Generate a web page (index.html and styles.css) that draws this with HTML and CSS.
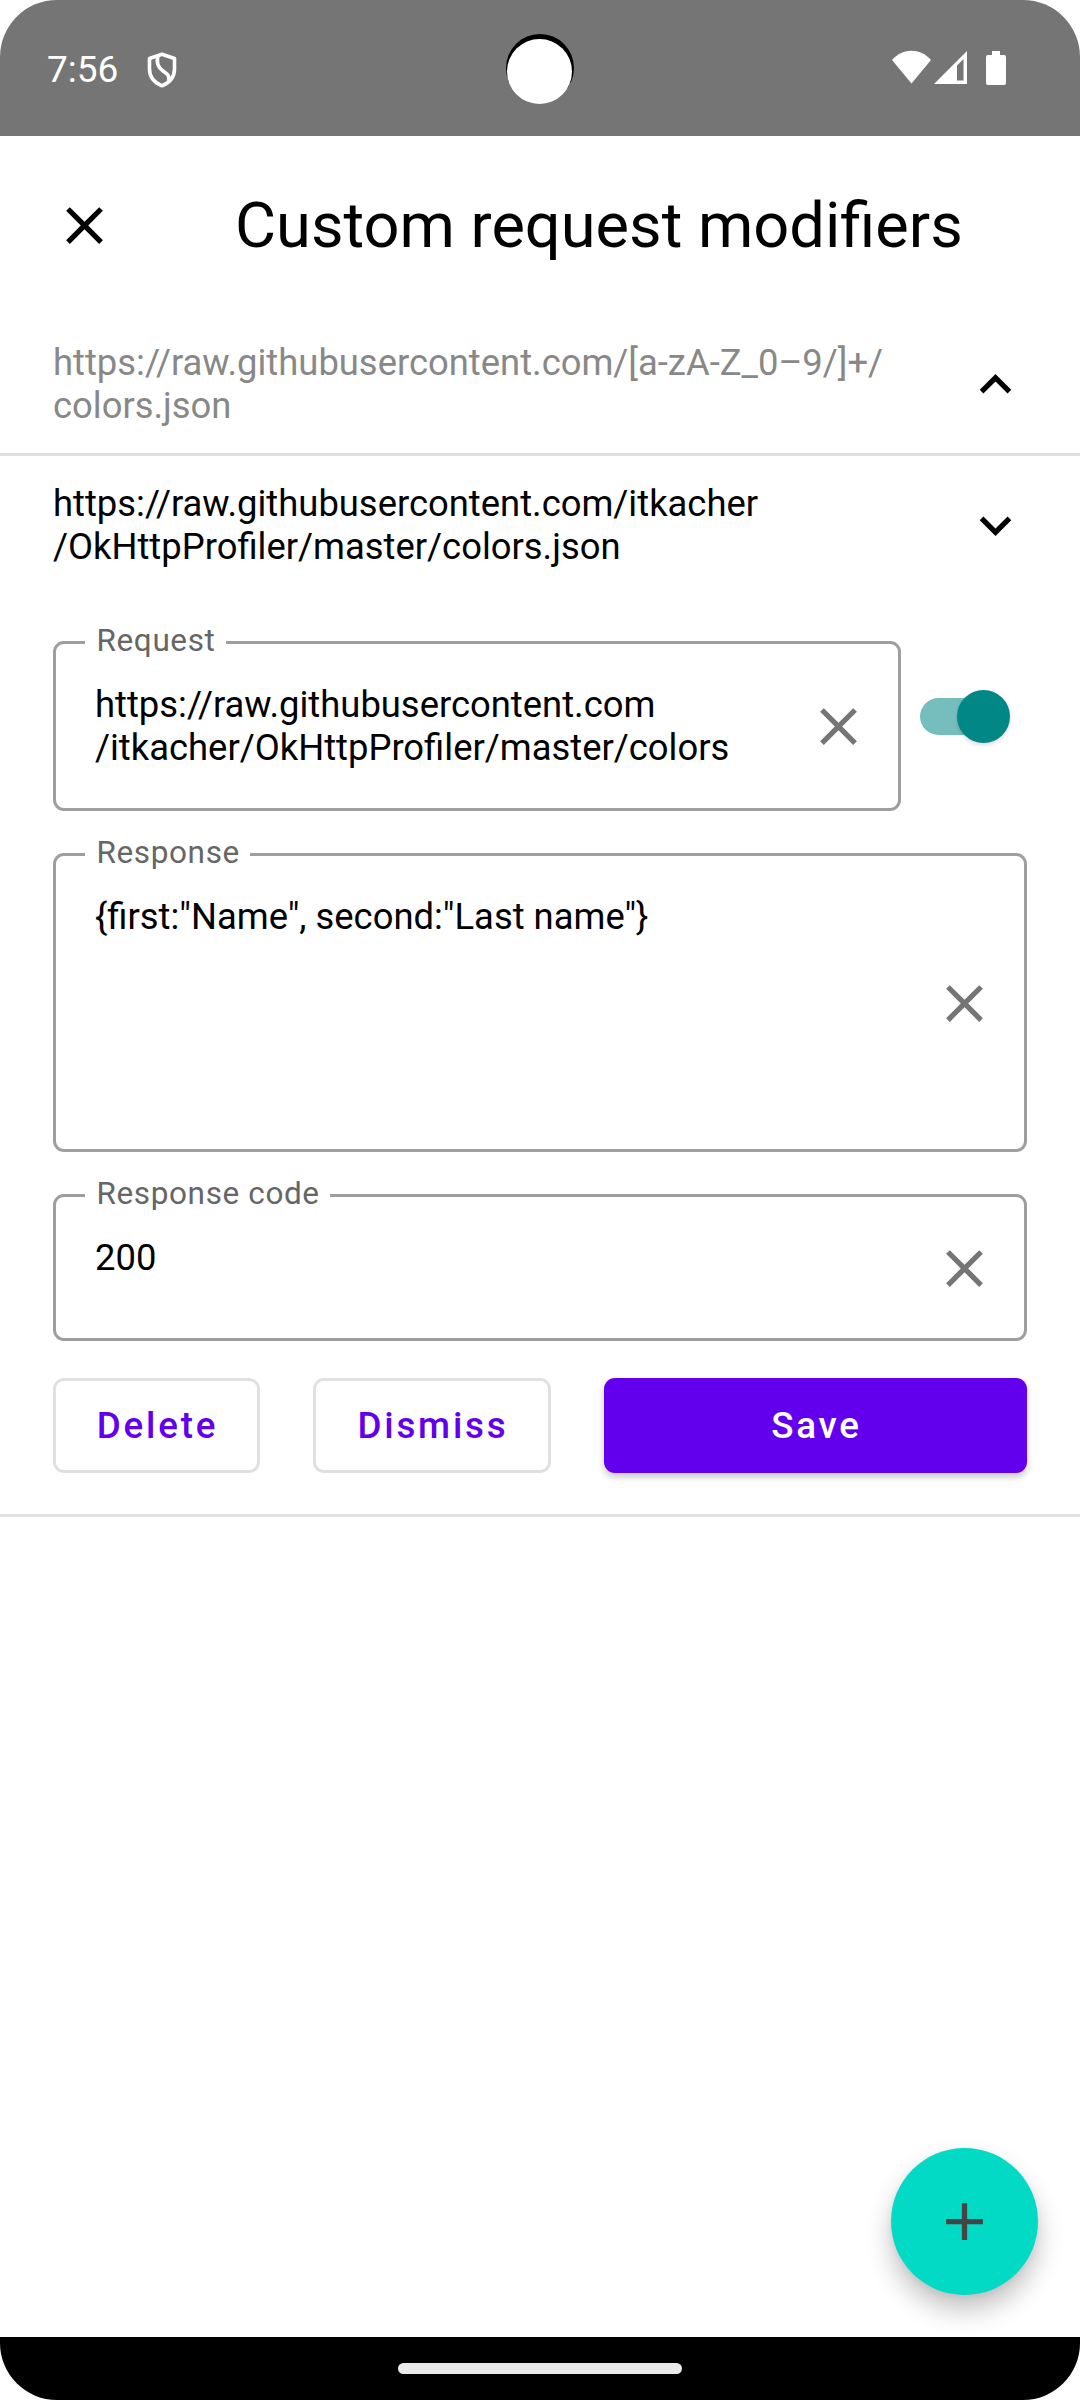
FILE: index.html
```html
<!DOCTYPE html>
<html lang="en">
<head>
<meta charset="utf-8">
<title>Custom request modifiers</title>
<link rel="stylesheet" href="styles.css">
</head>
<body>
<div class="screen">
  <header class="status-bar">
    <span class="clock">7:56</span>
    <svg class="shield" viewBox="0 0 30 36" width="30" height="36"><path d="M15 2.200 27.500 6.500V17C27.500 25 23 30.500 15 33.800 7 30.500 2.500 25 2.500 17V6.500Z" fill="none" stroke="#fff" stroke-width="3.600" stroke-linejoin="round"/><path d="M11 4C9 11 11 15.500 16 19 21 22.500 23 24 21.500 29" fill="none" stroke="#fff" stroke-width="3.600"/></svg>
    <svg class="camera" viewBox="0 0 70 72" width="70" height="72"><circle cx="35" cy="35" r="34" fill="#000"/><circle cx="34.500" cy="38.500" r="32.500" fill="#fff"/></svg>
    <svg class="signals" viewBox="0 0 116 36" width="116" height="36" fill="#fff"><path d="M19.500 33.500 0 10C11-2.200 28-2.200 39 10Z"/><path fill-rule="evenodd" d="M42 34 75 1V34ZM65 30.500H71.500V9L65 15.500Z"/><path d="M100 1H108V5H112Q114 5 114 7V33Q114 35 112 35H96Q94 35 94 33V7Q94 5 96 5H100Z"/></svg>
  </header>

  <div class="toolbar">
    <svg class="icon" viewBox="0 0 24 24"><path d="M19 6.410 17.590 5 12 10.590 6.410 5 5 6.410 10.590 12 5 17.590 6.410 19 12 13.410 17.590 19 19 17.590 13.410 12z"/></svg>
    <h1 class="title">Custom request modifiers</h1>
  </div>

  <main class="list">
    <div class="row divided">
      <p class="url muted">https://raw.githubusercontent.com/[a-zA-Z_0–9/]+/<br>colors.json</p>
      <svg class="icon" viewBox="0 0 24 24"><path d="M12 8l-6 6 1.410 1.410L12 10.830l4.590 4.580L18 14z"/></svg>
    </div>
    <div class="row">
      <p class="url">https://raw.githubusercontent.com/itkacher<br>/OkHttpProfiler/master/colors.json</p>
      <svg class="icon" viewBox="0 0 24 24"><path d="M16.590 8.590 12 13.170 7.410 8.590 6 10l6 6 6-6z"/></svg>
    </div>

    <form class="editor">
      <div class="request-line">
        <div class="field request">
          <label class="label">Request</label>
          <div class="value">https://raw.githubusercontent.com<br>/itkacher/OkHttpProfiler/master/colors</div>
          <svg class="icon clear" viewBox="0 0 24 24"><path d="M19 6.410 17.590 5 12 10.590 6.410 5 5 6.410 10.590 12 5 17.590 6.410 19 12 13.410 17.590 19 19 17.590 13.410 12z"/></svg>
        </div>
        <div class="switch"><span class="thumb"></span></div>
      </div>
      <div class="field response">
        <label class="label">Response</label>
        <div class="value">{first:"Name", second:"Last name"}</div>
        <svg class="icon clear" viewBox="0 0 24 24"><path d="M19 6.410 17.590 5 12 10.590 6.410 5 5 6.410 10.590 12 5 17.590 6.410 19 12 13.410 17.590 19 19 17.590 13.410 12z"/></svg>
      </div>
      <div class="field code">
        <label class="label">Response code</label>
        <div class="value">200</div>
        <svg class="icon clear" viewBox="0 0 24 24"><path d="M19 6.410 17.590 5 12 10.590 6.410 5 5 6.410 10.590 12 5 17.590 6.410 19 12 13.410 17.590 19 19 17.590 13.410 12z"/></svg>
      </div>
      <div class="actions">
        <button class="btn outlined delete" type="button">Delete</button>
        <button class="btn outlined dismiss" type="button">Dismiss</button>
        <button class="btn filled" type="button">Save</button>
      </div>
    </form>
  </main>

  <button class="fab" type="button" aria-label="Add">
    <svg viewBox="0 0 24 24" width="63" height="63"><path d="M19 13h-6v6h-2v-6H5v-2h6V5h2v6h6z"/></svg>
  </button>
  <footer class="nav-bar"><span class="handle"></span></footer>
</div>
</body>
</html>
```
FILE: styles.css
```css
* { box-sizing: border-box; margin: 0; padding: 0; }

body { background: #fff; font-family: Roboto, sans-serif; }

.screen {
  position: relative;
  display: flex;
  flex-direction: column;
  width: 1080px;
  height: 2400px;
  border-radius: 57px;
  overflow: hidden;
  background: #fff;
  color: #000;
}

.status-bar {
  position: relative;
  display: flex;
  align-items: center;
  height: 136px;
  padding: 0 72px 0 47px;
  background: #757575;
  color: #fff;
}
.clock { width: 100px; padding-top: 4px; font-size: 37px; line-height: 44px; }
.shield { margin-top: 3px; }
.camera { position: absolute; left: 505px; top: 33px; }
.signals { margin-left: auto; }

.toolbar {
  display: flex;
  align-items: center;
  height: 179px;
  padding-left: 53px;
  gap: 119px;
}
.icon { flex: none; display: block; width: 63px; height: 63px; fill: #000; }
.title { margin-top: -2px; font-size: 63.150px; font-weight: 400; line-height: 74px; }

.list { flex: 1; }
.row {
  display: flex;
  align-items: center;
  justify-content: space-between;
  padding: 26px 53px;
}
.divided { border-bottom: 3px solid #e0e0e0; }
.url, .value { font-size: 36.400px; line-height: 43px; }
.url { white-space: nowrap; }
.muted { color: #888; }

.editor {
  display: flex;
  flex-direction: column;
  gap: 42px;
  padding: 47px 53px 41px;
  border-bottom: 3px solid #e0e0e0;
}
.request-line { display: flex; align-items: flex-start; gap: 19px; }
.field {
  position: relative;
  display: flex;
  align-items: center;
  justify-content: space-between;
  border: 3px solid #9e9e9e;
  border-radius: 11px;
  padding: 0 28px 0 39px;
}
.label {
  position: absolute;
  left: 29px;
  top: -22px;
  padding: 0 10.500px 0 11.500px;
  background: #fff;
  color: #666;
  font-size: 31.500px;
  line-height: 37px;
  letter-spacing: .620px;
  white-space: nowrap;
}
.value { align-self: flex-start; padding-top: 39px; white-space: nowrap; }
.clear { fill: #757575; }
.request { width: 848px; height: 170px; }
.response { height: 299px; }
.code { height: 147px; }
.response .clear, .code .clear { margin-top: 2px; }

.switch {
  position: relative;
  width: 89px;
  height: 37px;
  margin-top: 57px;
  border-radius: 19px;
  background: #76bebd;
}
.thumb {
  position: absolute;
  right: -1px;
  top: -8px;
  width: 53px;
  height: 53px;
  border-radius: 50%;
  background: #018786;
  box-shadow: 0 2px 4px rgba(0, 0, 0, .15);
}

.actions { display: flex; gap: 53px; margin-top: -5px; }
.btn {
  height: 95px;
  padding-left: 2px;
  border: 0;
  border-radius: 11px;
  font: 500 36.750px/43px Roboto, sans-serif;
  letter-spacing: 2.800px;
}
.outlined { border: 3px solid #e0e0e0; background: #fff; color: #6200ee; }
.delete { width: 207px; }
.dismiss { width: 238px; }
.filled {
  flex: 1;
  background: #6200ee;
  color: #fff;
  box-shadow: 0 4px 7px rgba(0, 0, 0, .22);
}

.fab {
  position: absolute;
  left: 891px;
  top: 2148px;
  display: flex;
  align-items: center;
  justify-content: center;
  width: 147px;
  height: 147px;
  border: 0;
  border-radius: 50%;
  background: #03dac5;
  fill: #444;
  box-shadow: 0 15px 26px rgba(0, 0, 0, .24), 0 2px 6px rgba(0, 0, 0, .06);
}

.nav-bar {
  position: relative;
  display: flex;
  justify-content: center;
  height: 63px;
  padding-top: 26px;
  background: #000;
}
.handle { width: 284px; height: 11px; border-radius: 6px; background: #ebebeb; }
```
